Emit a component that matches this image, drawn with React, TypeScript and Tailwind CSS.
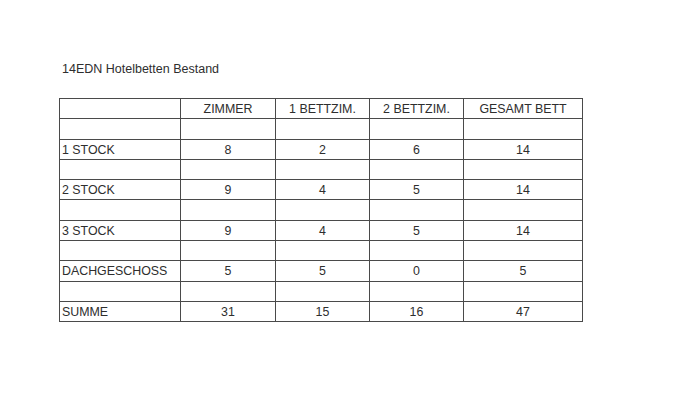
import { Fragment } from 'react';

const headers = ['', 'ZIMMER', '1 BETTZIM.', '2 BETTZIM.', 'GESAMT BETT'];

const rows: string[][] = [
  ['1 STOCK', '8', '2', '6', '14'],
  ['2 STOCK', '9', '4', '5', '14'],
  ['3 STOCK', '9', '4', '5', '14'],
  ['DACHGESCHOSS', '5', '5', '0', '5'],
  ['SUMME', '31', '15', '16', '47'],
];

const widths = ['w-[121px]', 'w-[95px]', 'w-[94px]', 'w-[94px]', 'w-[119px]'];

const Cell = ({ children, i }: { children?: React.ReactNode; i: number }) => (
  <td
    className={`h-[20.3px] border border-[#4a4a4a] p-0 pt-[1px] leading-none ${widths[i]} ${
      i === 0 ? 'pl-[2px] text-left' : 'text-center'
    }`}
  >
    {children}
  </td>
);

const App = () => {
  return (
    <div className="h-[400px] w-[695px] bg-white pl-[59px] pt-[62px] text-[#2e2e2e] [font-family:'Liberation_Sans',Arial,sans-serif]">
      <p className="ml-[3px] text-[12.5px] leading-[14px]">14EDN Hotelbetten Bestand</p>
      <table className="mt-[22px] table-fixed border-collapse text-[12.4px]">
        <tbody>
          <tr>
            {headers.map((h, i) => (
              <Cell key={i} i={i}>
                {h}
              </Cell>
            ))}
          </tr>
          {rows.map((r) => (
            <Fragment key={r[0]}>
              <tr>
                {r.map((_, i) => (
                  <Cell key={i} i={i} />
                ))}
              </tr>
              <tr>
                {r.map((v, i) => (
                  <Cell key={i} i={i}>
                    {v}
                  </Cell>
                ))}
              </tr>
            </Fragment>
          ))}
        </tbody>
      </table>
    </div>
  );
};

export default App;
